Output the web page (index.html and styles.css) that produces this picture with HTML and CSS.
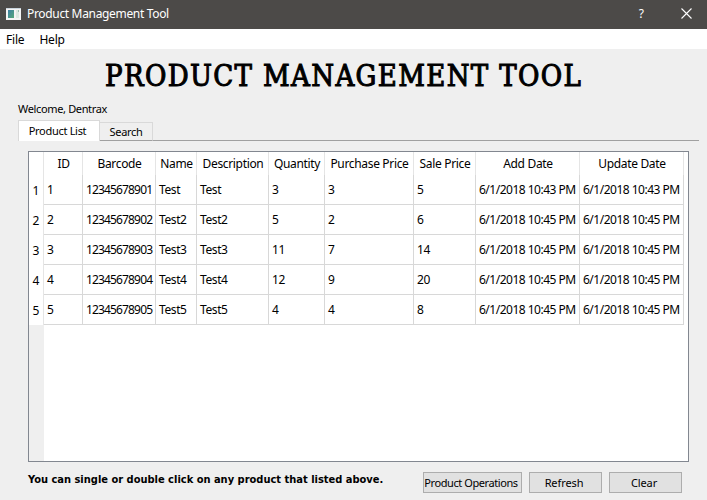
FILE: index.html
```html
<!DOCTYPE html>
<html lang="en">
<head>
<meta charset="utf-8">
<title>Product Management Tool</title>
<link rel="stylesheet" href="styles.css">
</head>
<body>
<header class="titlebar">
  <svg class="app-icon" width="15" height="12" viewBox="0 0 15 12"><defs><linearGradient id="g" x2="1" y2="1"><stop stop-color="#3d7fa5"/><stop offset="1" stop-color="#55a878"/></linearGradient></defs><path fill="#f4f4f4" d="M0 0h15v12H0z"/><path fill="#c9d4dc" d="M0 0h15v1H0z"/><path fill="url(#g)" d="M2 2h6v8H2z"/><path fill="#dce9e1" d="M10 2h3v8h-3z"/><path fill="#9bbdaf" d="M12 2h1v2h-1z"/></svg>
  <span class="caption">Product Management Tool</span>
  <span class="help">?</span>
  <svg class="close" width="11" height="11" viewBox="0 0 11 11"><path d="M.5.5l10 10M10.500.5l-10 10" stroke="#fff" stroke-width="1.1"/></svg>
</header>
<nav class="menu"><span class="file">File</span><span class="help-menu">Help</span></nav>
<main>
  <h1><span>PRODUCT MANAGEMENT TOOL</span></h1>
  <p class="welcome">Welcome, Dentrax</p>
  <div class="tabs"><div class="tab active"><span>Product List</span></div><div class="tab"><span>Search</span></div><div class="rule"></div></div>
  <section class="frame">
    <table>
      <colgroup><col class="c0"><col class="c1"><col class="c2"><col class="c3"><col class="c4"><col class="c5"><col class="c6"><col class="c7"><col class="c8"><col class="c8"></colgroup>
      <thead><tr><th></th><th>ID</th><th>Barcode</th><th>Name</th><th>Description</th><th>Quantity</th><th>Purchase Price</th><th>Sale Price</th><th>Add Date</th><th>Update Date</th></tr></thead>
      <tbody>
        <tr><th>1</th><td>1</td><td class="code">12345678901</td><td>Test</td><td>Test</td><td>3</td><td>3</td><td>5</td><td class="date">6/1/2018 10:43 PM</td><td class="date">6/1/2018 10:43 PM</td></tr>
        <tr><th>2</th><td>2</td><td class="code">12345678902</td><td>Test2</td><td>Test2</td><td>5</td><td>2</td><td>6</td><td class="date">6/1/2018 10:45 PM</td><td class="date">6/1/2018 10:45 PM</td></tr>
        <tr><th>3</th><td>3</td><td class="code">12345678903</td><td>Test3</td><td>Test3</td><td>11</td><td>7</td><td>14</td><td class="date">6/1/2018 10:45 PM</td><td class="date">6/1/2018 10:45 PM</td></tr>
        <tr><th>4</th><td>4</td><td class="code">12345678904</td><td>Test4</td><td>Test4</td><td>12</td><td>9</td><td>20</td><td class="date">6/1/2018 10:45 PM</td><td class="date">6/1/2018 10:45 PM</td></tr>
        <tr><th>5</th><td>5</td><td class="code">12345678905</td><td>Test5</td><td>Test5</td><td>4</td><td>4</td><td>8</td><td class="date">6/1/2018 10:45 PM</td><td class="date">6/1/2018 10:45 PM</td></tr>
      </tbody>
    </table>
    <div class="gutter"></div>
  </section>
  <footer><strong>You can single or double click on any product that listed above.</strong><button class="wide">Product Operations</button><button>Refresh</button><button>Clear</button></footer>
</main>
</body>
</html>
```
FILE: styles.css
```css
* { box-sizing: border-box; }
body { margin: 0; width: 707px; height: 500px; overflow: hidden; background: #efefef; color: #000; font: 12px/16px "Noto Sans", "Open Sans", sans-serif; white-space: nowrap; }
.titlebar { display: flex; align-items: center; height: 29px; padding: 0 15px 2px 6px; background: #4c4a48; color: #fff; }
.caption { margin-left: 6px; letter-spacing: -0.33px; }
.help { margin-left: auto; margin-right: 37px; }
.menu { display: flex; height: 20px; padding: 3px 6px 0; background: #fff; letter-spacing: -0.2px; }
.help-menu { margin-left: 15px; }
h1 { margin: 0; height: 52px; padding: 7px 0 0 105px; font: 29px/41px "DejaVu Serif Condensed", "DejaVu Serif", serif; font-stretch: condensed; letter-spacing: 1.35px; -webkit-text-stroke: 1px #000; }
.welcome { margin: 0; height: 19px; padding-left: 18px; font-size: 11px; letter-spacing: -0.35px; }
.tabs { display: flex; align-items: flex-end; height: 21px; margin: 0 8px 0 18px; font-size: 11px; letter-spacing: -0.3px; }
.tab { width: 53px; height: 19px; padding-top: 1px; border: 1px solid #d9d9d9; border-left: 0; border-bottom-color: #a0a0a0; text-align: center; }
.tab.active { width: 82px; height: 21px; padding: 2px 3px 0 0; background: #fff; border-left: 1px solid #d9d9d9; border-bottom: 0; }
.rule { flex: 1; border-bottom: 1px solid #a0a0a0; }
.frame { display: flex; flex-direction: column; width: 661px; height: 311px; margin: 10px 0 0 28px; border: 1px solid #828790; background: #fff; }
table { width: 655px; table-layout: fixed; border-collapse: separate; border-spacing: 0; }
.c0 { width: 15px; } .c1 { width: 39px; } .c2 { width: 73px; } .c3 { width: 41px; } .c4 { width: 72px; } .c5 { width: 56px; } .c6 { width: 89px; } .c7 { width: 62px; } .c8 { width: 104px; }
th, td { padding: 0; font-weight: 400; }
thead th { height: 23px; padding-left: 1px; border-right: 1px solid #e5e5e5; letter-spacing: -0.33px; }
tbody th { height: 30px; padding-top: 1px; border-right: 1px solid #e5e5e5; }
td { height: 30px; padding-left: 3px; border-right: 1px solid #d8d8d8; border-bottom: 1px solid #d8d8d8; letter-spacing: -0.4px; }
.code { letter-spacing: -0.85px; }
.date { letter-spacing: -0.5px; }
.gutter { flex: 1; width: 15px; background: #efefef; }
footer { display: flex; height: 38px; padding: 10px 25px 0 28px; }
strong { flex: 1; font: bold 11px/15px "DejaVu Sans Condensed", "DejaVu Sans", sans-serif; font-stretch: condensed; }
button { width: 73px; height: 21px; margin-left: 7px; padding: 0 3px 0 0; border: 1px solid #adadad; background: #e1e1e1; color: #000; font: 11px/17px "Noto Sans", sans-serif; letter-spacing: -0.1px; }
button.wide { width: 99px; margin-left: 0; letter-spacing: -0.42px; }
```
